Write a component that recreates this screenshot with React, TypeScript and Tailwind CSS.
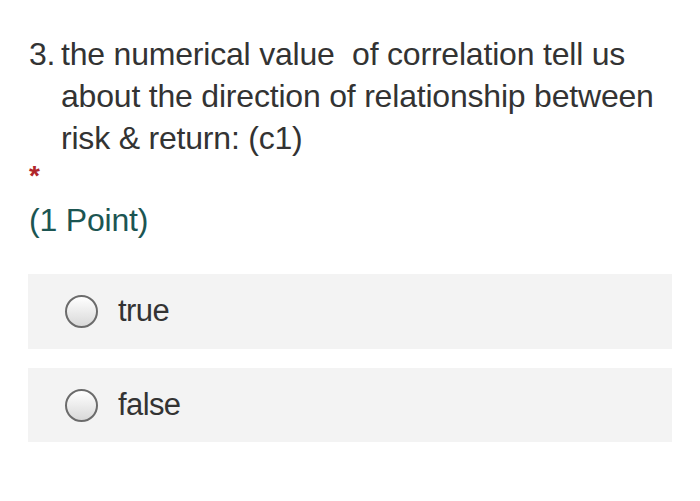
import React from "react";

function Radio() {
  return (
    <span className="block w-[33px] h-[33px] rounded-full border-2 border-[#6b6b6b] bg-gradient-to-b from-[#ffffff] to-[#d9d9d9] shrink-0" />
  );
}

export default function App() {
  return (
    <div className="w-[700px] h-[501px] bg-white overflow-hidden" style={{ fontFamily: '"Liberation Sans", Arial, sans-serif' }}>
      <div className="pt-[33px] pl-[29px] text-[32px] leading-[42px] tracking-[-0.2px] text-[#333333]">
        <div className="flex">
          <span className="w-[32px] shrink-0">3.</span>
          <span className="whitespace-pre-wrap">{"the numerical value  of correlation tell us\nabout the direction of relationship between\nrisk & return: (c1)"}</span>
        </div>
      </div>
      <div className="pl-[29px] mt-[6px] text-[#b0262a] text-[28px] leading-[22px] font-bold">*</div>
      <div className="pl-[29px] mt-[12px] text-[32px] leading-[42px] tracking-[-0.2px] text-[#1c5552]">(1 Point)</div>
      <div className="mt-[33px] mx-[28px] flex flex-col gap-[19px]">
        <div className="h-[75px] bg-[#f3f3f3] flex items-center pl-[37px] gap-[20px]">
          <Radio />
          <span className="text-[31px] tracking-[-0.6px] text-[#333333]">true</span>
        </div>
        <div className="h-[74px] bg-[#f3f3f3] flex items-center pl-[37px] gap-[20px]">
          <Radio />
          <span className="text-[31px] tracking-[-0.6px] text-[#333333]">false</span>
        </div>
      </div>
    </div>
  );
}
